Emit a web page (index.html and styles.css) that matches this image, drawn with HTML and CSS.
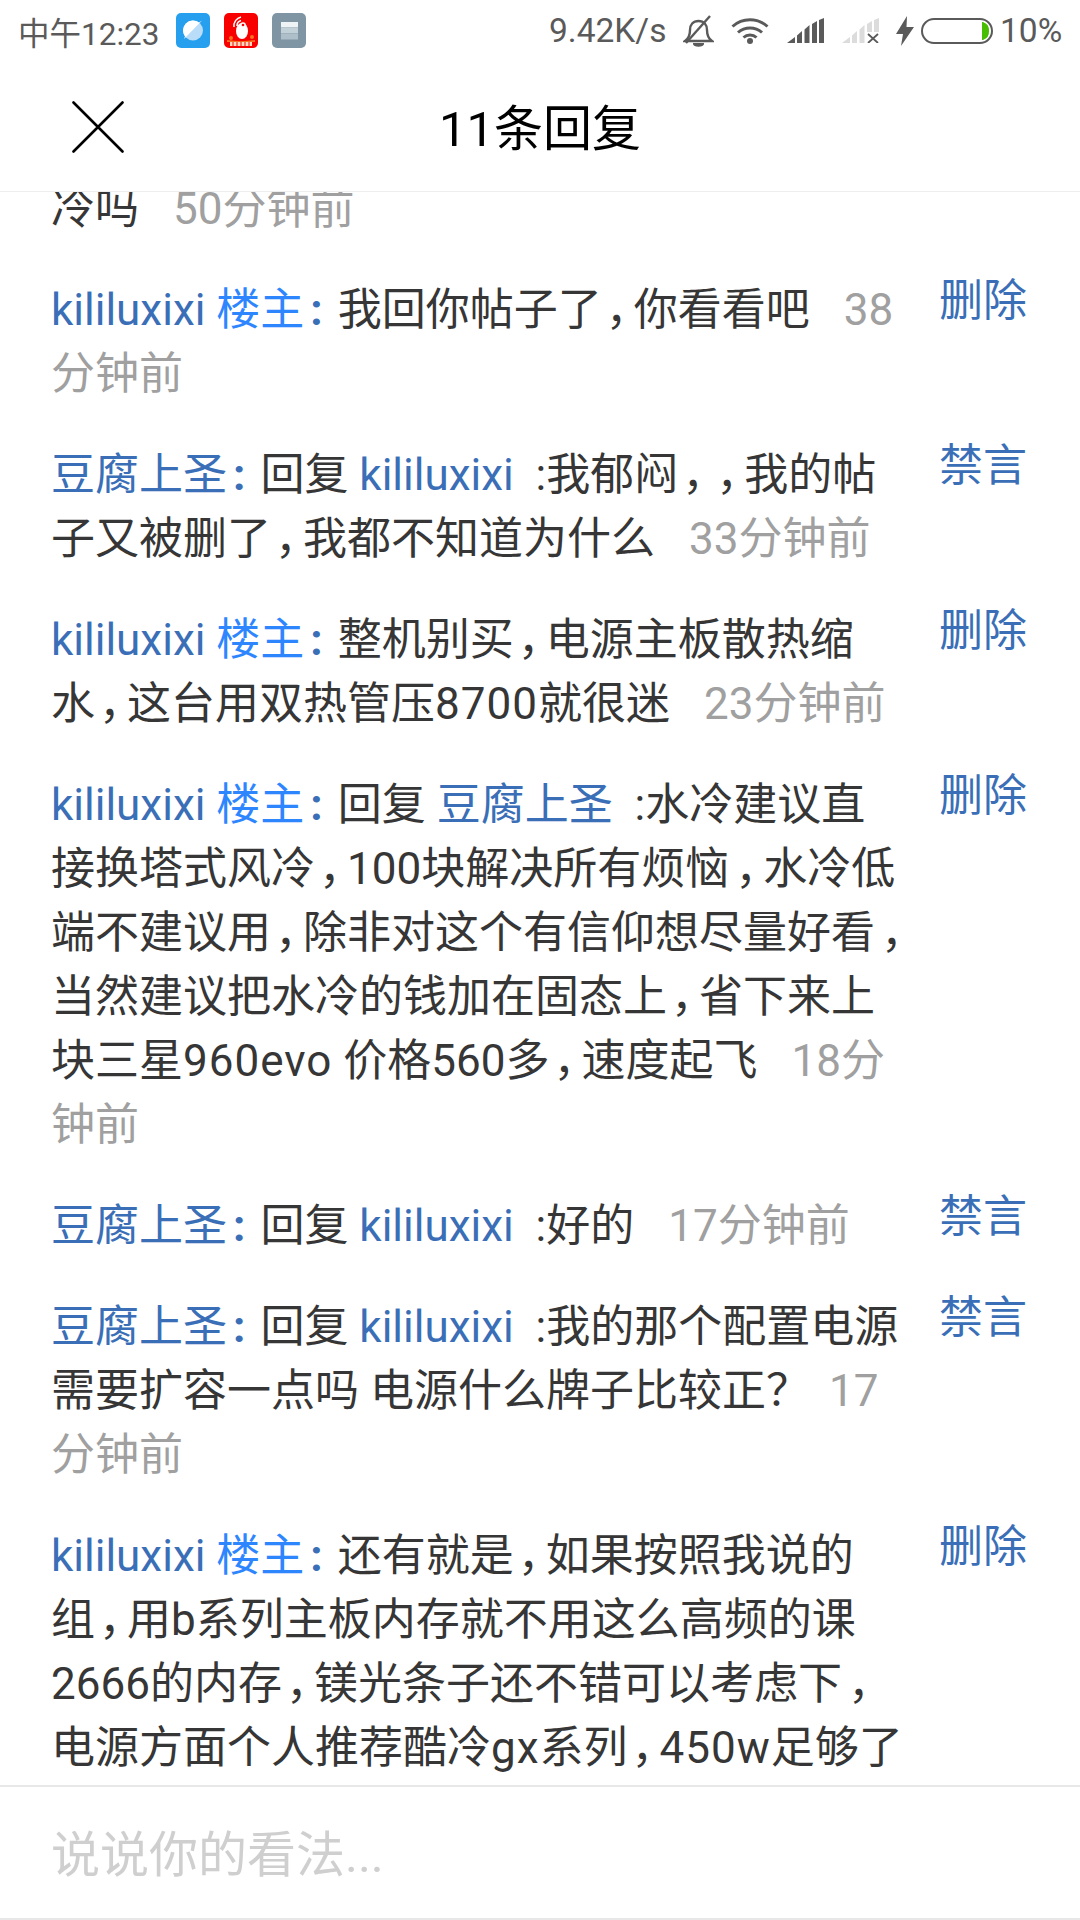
FILE: index.html
```html
<!DOCTYPE html>
<html lang="zh-CN">
<head>
<meta charset="utf-8">
<title>11条回复</title>
<link rel="stylesheet" href="styles.css">
</head>
<body>
<div class="page">
  <div class="status">
    <span class="clock">中午12:23</span>
    <div class="apps">
      <svg class="app" viewBox="0 0 34 35"><rect width="34" height="35" rx="5" fill="#26a0ee"/><circle cx="17" cy="17.500" r="10" fill="#b9dcf9"/><path d="M9 23.500A10 10 0 0 1 23 9.500L26 7.500 8 26Z" fill="#fff"/></svg>
      <svg class="app" viewBox="0 0 34 35"><rect width="34" height="35" rx="5" fill="#f80000"/><ellipse cx="18" cy="18" rx="6" ry="8" fill="#fff"/><circle cx="19" cy="12" r="2.800" fill="#fff"/><circle cx="19" cy="12" r="1.300" fill="#f80000"/><path d="M10 14a9 9 0 0 1 7-10M13 13a5.500 5.500 0 0 1 4-5.500" fill="none" stroke="#fff" stroke-width="1.500"/><circle cx="7" cy="25" r="2" fill="#f7711e"/><circle cx="28" cy="24" r="2" fill="#f7711e"/><path d="M3 27c9 1.500 19 1.500 28 0v2H3Z" fill="#f7711e"/><rect x="6" y="29" width="22" height="4" fill="#ffd9c0"/><path d="M9 29v4M13 29v4M17 29v4M21 29v4M25 29v4" stroke="#f80000" stroke-width="1"/></svg>
      <svg class="app" viewBox="0 0 34 35"><rect width="34" height="35" rx="5" fill="#7f95a3"/><rect x="9" y="9" width="17" height="5.500" fill="#eef3f6"/><rect x="9" y="15" width="17" height="5.500" fill="#c2d0d8"/><rect x="9" y="21" width="17" height="5.500" fill="#aebfc9"/></svg>
    </div>
    <div class="sys">
      <span class="speed">9.42K/s</span>
      <svg class="bell" viewBox="0 0 31 32"><path d="M2 26c3-2 5-5 5-11 0-5 3-9 8.500-9s8.500 4 8.500 9c0 6 2 9 5 11Z" fill="none" stroke="#5a5a5a" stroke-width="2.400"/><path d="M10 28h11v1a5 2.500 0 0 1-11 0Z" fill="#5a5a5a"/><path d="M3 28 27 1" stroke="#5a5a5a" stroke-width="2.400"/></svg>
      <svg class="wifi" viewBox="0 0 38 27"><path d="M1.500 9.500a26 26 0 0 1 35 0M7 15.500a18 18 0 0 1 24 0M12.500 20.500a9.500 9.500 0 0 1 13 0" fill="none" stroke="#5a5a5a" stroke-width="3"/><circle cx="19" cy="24" r="3" fill="#5a5a5a"/></svg>
      <svg class="signal" viewBox="0 0 37 25"><path d="M0 25 8 19V25ZM10 17.500 15 13V25H10ZM17.500 11.500 22.500 7V25H17.500ZM25 6 30 3V25H25ZM32 2 37 0V25H32Z" fill="#5a5a5a"/></svg>
      <svg class="signal" viewBox="0 0 37 25"><path d="M0 25 8 19V25ZM10 17.500 15 13V25H10ZM17.500 11.500 22.500 7V25H17.500ZM25 6 30 3V14H25ZM32 2 37 0V14H32Z" fill="#dcdcdc"/><path d="M26 16 36 25M36 16 26 25" stroke="#5a5a5a" stroke-width="1.800"/></svg>
      <svg class="bolt" viewBox="0 0 18 30"><path d="M11 0 0 18H7L5 30 18 11H10.500Z" fill="#5a5a5a"/></svg>
      <svg class="battery" viewBox="0 0 72 26"><rect x="1" y="1" width="70" height="24" rx="12" fill="none" stroke="#5a5a5a" stroke-width="2"/><path d="M61 4h1a9 9 0 0 1 6 9 9 9 0 0 1-6 9h-1Z" fill="#46bd00"/></svg>
      <span class="pct">10%</span>
    </div>
  </div>
  <header class="bar">
    <svg class="close" viewBox="0 0 52 52"><path d="M1.500 1.500 50.500 50.500M50.500 1.500 1.500 50.500" stroke="#000" stroke-width="2.600" stroke-linecap="round"/></svg>
    <h1 class="title">11条回复</h1>
  </header>
  <main class="list">
    <div class="row first">
      <p class="text">冷吗<span class="time">50分钟前</span></p>
    </div>
    <div class="row">
      <p class="text"><span class="name">kililuxixi</span> <span class="host">楼主</span><b class="colon">:</b>我回你帖子了<span class="comma">，</span>你看看吧<span class="time">38<br>分钟前</span></p>
      <a class="act">删除</a>
    </div>
    <div class="row">
      <p class="text"><span class="name">豆腐上圣</span><b class="colon">:</b>回复 <span class="name">kililuxixi</span> &nbsp;:我郁闷<span class="comma">，</span><span class="comma">，</span>我的帖<br>子又被删了<span class="comma">，</span>我都不知道为什么<span class="time">33分钟前</span></p>
      <a class="act">禁言</a>
    </div>
    <div class="row">
      <p class="text"><span class="name">kililuxixi</span> <span class="host">楼主</span><b class="colon">:</b>整机别买<span class="comma">，</span>电源主板散热缩<br>水<span class="comma">，</span>这台用双热管压<span class="wide">8700</span>就很迷<span class="time">23分钟前</span></p>
      <a class="act">删除</a>
    </div>
    <div class="row">
      <p class="text"><span class="name">kililuxixi</span> <span class="host">楼主</span><b class="colon">:</b>回复 <span class="name">豆腐上圣</span> &nbsp;:水冷建议直<br>接换塔式风冷<span class="comma">，</span>100块解决所有烦恼<span class="comma">，</span>水冷低<br>端不建议用<span class="comma">，</span>除非对这个有信仰想尽量好看<span class="comma">，</span><br>当然建议把水冷的钱加在固态上<span class="comma">，</span>省下来上<br>块三星<span class="wide">960evo</span> 价格560多<span class="comma">，</span>速度起飞<span class="time">18分<br>钟前</span></p>
      <a class="act">删除</a>
    </div>
    <div class="row">
      <p class="text"><span class="name">豆腐上圣</span><b class="colon">:</b>回复 <span class="name">kililuxixi</span> &nbsp;:好的<span class="time">17分钟前</span></p>
      <a class="act">禁言</a>
    </div>
    <div class="row">
      <p class="text"><span class="name">豆腐上圣</span><b class="colon">:</b>回复 <span class="name">kililuxixi</span> &nbsp;:我的那个配置电源<br>需要扩容一点吗 电源什么牌子比较正<span class="mark">？</span><span class="time">17<br>分钟前</span></p>
      <a class="act">禁言</a>
    </div>
    <div class="row">
      <p class="text"><span class="name">kililuxixi</span> <span class="host">楼主</span><b class="colon">:</b>还有就是<span class="comma">，</span>如果按照我说的<br>组<span class="comma">，</span>用b系列主板内存就不用这么高频的课<br>2666的内存<span class="comma">，</span>镁光条子还不错可以考虑下<span class="comma">，</span><br>电源方面个人推荐酷冷<span class="wide">gx</span>系列<span class="comma">，</span><span class="wide">450w</span>足够了</p>
      <a class="act">删除</a>
    </div>
  </main>
  <footer class="input">说说你的看法...</footer>
</div>
</body>
</html>
```
FILE: styles.css
```css
* { box-sizing: border-box; }
html, body { margin: 0; padding: 0; background: #fff; }
body { font-family: Roboto, "Noto Sans CJK SC", sans-serif; }
.page { width: 1080px; height: 1920px; display: flex; flex-direction: column; overflow: hidden; }
.status { height: 60px; flex: none; display: flex; align-items: center; padding: 1px 20px 0 18px; color: #5a5a5a; font-size: 31.5px; }
.clock { width: 158px; }
.apps { display: flex; gap: 14px; }
.app { width: 34px; height: 35px; display: block; }
.sys { margin-left: auto; display: flex; align-items: center; }
.speed { width: 134px; font-size: 33.500px; white-space: nowrap; }
.bell { width: 31px; height: 32px; margin-right: 17px; }
.wifi { width: 38px; height: 27px; margin-right: 18px; }
.signal { width: 37px; height: 25px; margin-right: 18px; }
.signal + .signal { margin-right: 17px; }
.bolt { width: 18px; height: 30px; margin-right: 7px; }
.battery { width: 72px; height: 26px; margin-right: 7px; }
.pct { width: 60px; font-size: 33.500px; white-space: nowrap; }
.bar { height: 132px; flex: none; display: flex; align-items: center; justify-content: center; position: relative; border-bottom: 1px solid #eeeeee; padding-bottom: 3px; }
.close { position: absolute; left: 72px; top: 41px; width: 52px; height: 52px; }
.title { margin: 0; font-size: 49px; font-weight: 400; color: #000; }
.list { flex: 1; min-height: 0; overflow: hidden; display: flex; flex-direction: column; gap: 37px; }
.row { flex: none; display: flex; align-items: flex-start; padding: 0 53px 0 51px; }
.row.first { margin-top: -15px; }
.text { margin: 0; flex: 1; font-size: 44px; line-height: 64px; color: #363636; white-space: nowrap; }
.name { color: #3a6fb7; }
.host { color: #2e86ff; }
.colon { color: #3a6fb7; font-weight: 700; margin: 0 15px 0 6px; }
.comma { font-feature-settings: "halt"; margin: 0 6px 0 4px; }
.comma + .comma { margin-left: 6px; }
.mark { font-feature-settings: "halt"; margin-right: 7px; }
.wide { letter-spacing: 1px; }
.time { color: #a0a0a0; margin-left: 34px; }
.act { flex: none; width: 88px; margin-top: -9px; font-size: 44px; line-height: 64px; color: #3a6fb7; }
.input { height: 135px; flex: none; display: flex; align-items: center; padding: 0 0 4px 51px; font-size: 49px; color: #cfcfcf; border-top: 2px solid #e8e8e8; border-bottom: 2px solid #e8e8e8; }
```
